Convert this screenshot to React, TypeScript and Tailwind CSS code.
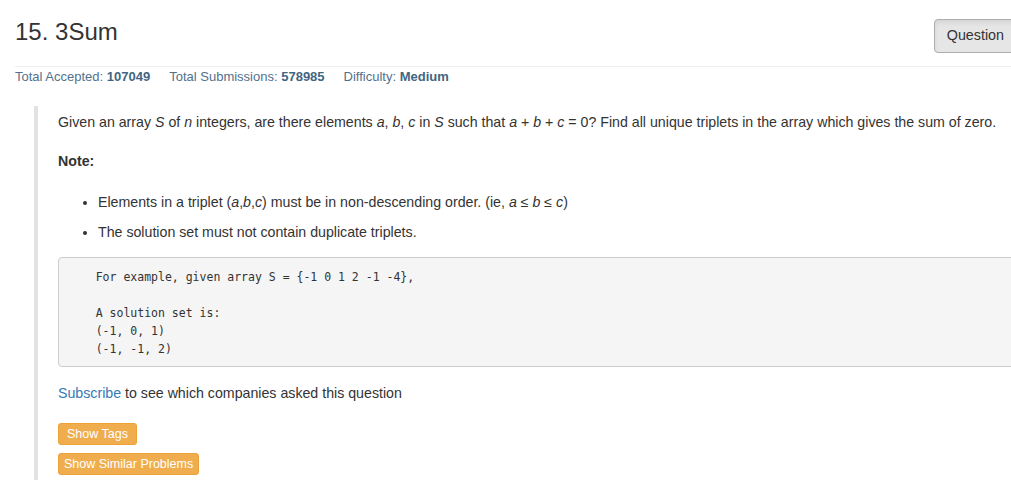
import React from 'react';

const sans = "font-['Liberation_Sans',Arial,sans-serif]";

function Stat({ label, value }: { label: string; value: string }) {
  return (
    <span>
      {label}: <b className="font-bold text-[#3f6583]">{value}</b>
    </span>
  );
}

export default function App() {
  return (
    <div className={`w-[1011px] h-[489px] overflow-hidden bg-white text-[#333] ${sans}`}>
      <div className="ml-[15px] w-[1000px]">
        <div className="flex items-start justify-between pt-[19px]">
          <h3 className="text-[24px] leading-[26px] font-normal">15. 3Sum</h3>
          <button className="h-[34px] px-[12px] text-[14.3px] text-[#333] bg-[#e6e6e6] border border-[#adadad] rounded-[4px] shadow-[inset_0_3px_5px_rgba(0,0,0,0.08)] mr-[-2px]">
            Question
          </button>
        </div>
        <div className="mt-[13px] border-t border-[#eee]" />
        <div className="mt-[1px] flex gap-[19px] text-[13px] leading-[17px] text-[#52718c]">
          <Stat label="Total Accepted" value="107049" />
          <Stat label="Total Submissions" value="578985" />
          <Stat label="Difficulty" value="Medium" />
        </div>
      </div>

      <div className="ml-[34px] mt-[21px] w-[1000px] border-l-4 border-[#e2e2e2] pl-[20px] pt-[6px] pb-[5px] text-[14.2px] leading-[20px]">
        <p>
          Given an array <i>S</i> of <i>n</i> integers, are there elements <i>a</i>, <i>b</i>, <i>c</i> in <i>S</i> such
          that <i>a</i> + <i>b</i> + <i>c</i> = 0? Find all unique triplets in the array which gives the sum of zero.
        </p>
        <p className="mt-[19px] font-bold">Note:</p>
        <ul className="mt-[21px] list-disc pl-[40px]">
          <li>
            Elements in a triplet (<i>a</i>,<i>b</i>,<i>c</i>) must be in non-descending order. (ie, <i>a</i> ≤ <i>b</i> ≤{' '}
            <i>c</i>)
          </li>
          <li className="mt-[10px]">The solution set must not contain duplicate triplets.</li>
        </ul>
        <pre className="mt-[15px] h-[110px] bg-[#f5f5f5] border border-[#ccc] rounded-[4px] pl-[9px] pt-[10px] font-['DejaVu_Sans_Mono',monospace] text-[11.5px] leading-[18px] text-[#333] whitespace-pre">
{`    For example, given array S = {-1 0 1 2 -1 -4},

    A solution set is:
    (-1, 0, 1)
    (-1, -1, 2)`}
        </pre>
        <p className="mt-[16px]">
          <a className="text-[#337ab7]">Subscribe</a> to see which companies asked this question
        </p>
        <div className="mt-[20px] flex flex-col items-start gap-[8px]">
          <button className="h-[22px] px-[8px] text-[12.5px] leading-[20px] text-white bg-[#f0ad4e] border border-[#eea236] rounded-[3px]">
            Show Tags
          </button>
          <button className="h-[22px] px-[5px] text-[12.5px] leading-[20px] text-white bg-[#f0ad4e] border border-[#eea236] rounded-[3px]">
            Show Similar Problems
          </button>
        </div>
      </div>
    </div>
  );
}
